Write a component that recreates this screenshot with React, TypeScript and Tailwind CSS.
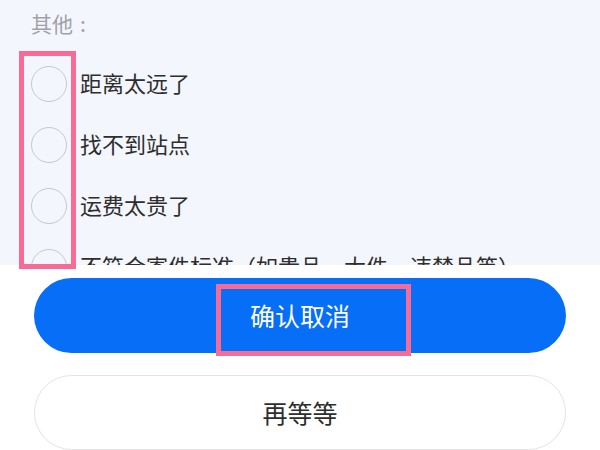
import React from "react";

const options = [
  "距离太远了",
  "找不到站点",
  "运费太贵了",
  "不符合寄件标准（如贵品、大件、违禁品等）",
];

const font = { fontFamily: '"Noto Sans CJK SC", "Noto Sans", sans-serif' };

export default function App() {
  return (
    <div
      className="relative w-[600px] h-[450px] overflow-hidden bg-white"
      style={font}
    >
      {/* reason list */}
      <div className="h-[265px] overflow-hidden bg-[#f3f6fc] pl-[31px]">
        <div className="h-[53px] pt-[8px] text-[21px] leading-[30px] text-[#9fa2a8]">
          其他<span className="ml-[7px]">:</span>
        </div>
        {options.map((label) => (
          <div key={label} className="flex h-[61px] items-center">
            <div className="h-[36px] w-[36px] shrink-0 rounded-full border border-[#c6c8cc]" />
            <span className="mb-[4px] ml-[13px] whitespace-nowrap text-[22px] leading-[30px] text-[#2e2e2e]">
              {label}
            </span>
          </div>
        ))}
      </div>

      {/* actions */}
      <div className="px-[34px] pt-[13px]">
        <button className="flex h-[75px] w-full items-center justify-center rounded-full bg-[#066ef7] text-[25px] text-white">
          确认取消
        </button>
        <button className="mt-[22px] flex h-[75px] w-full items-center justify-center rounded-full border-[1.5px] border-[#e4e4e4] bg-white text-[25px] text-[#2e2e2e]">
          再等等
        </button>
      </div>

      {/* highlight frames */}
      <div className="pointer-events-none absolute left-[19px] top-[51px] h-[218px] w-[57px] border-[5px] border-[#f76b94]" />
      <div className="pointer-events-none absolute left-[216px] top-[284px] h-[72px] w-[195px] border-[5px] border-[#f76b94]" />
    </div>
  );
}
